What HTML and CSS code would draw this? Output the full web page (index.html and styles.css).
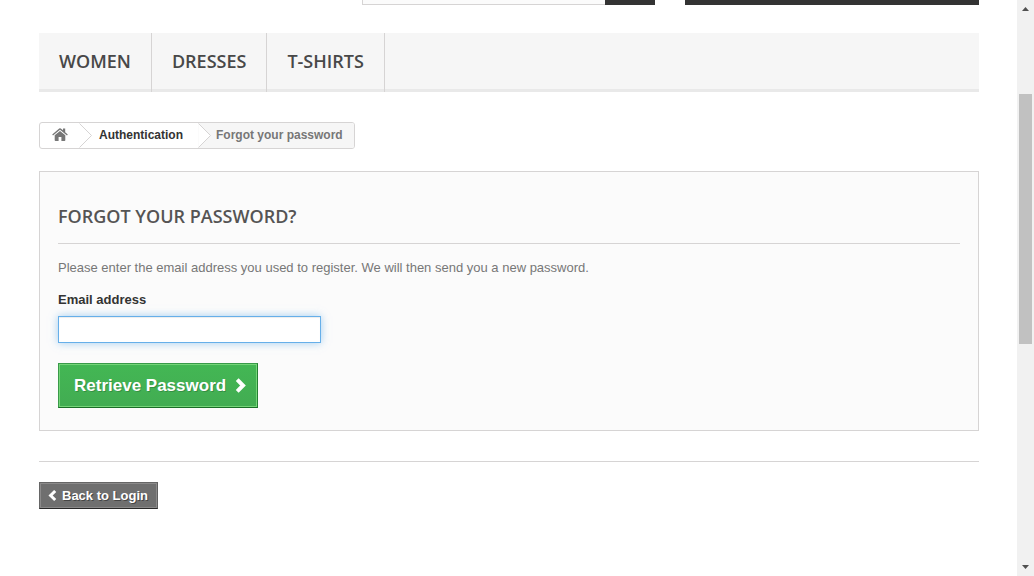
FILE: index.html
```html
<!DOCTYPE html>
<html lang="en">
<head>
<meta charset="utf-8">
<meta name="viewport" content="width=device-width, initial-scale=1">
<title>Forgot your password</title>
<link rel="stylesheet" href="styles.css">
</head>
<body>
<div class="page">
  <header class="header">
    <div class="search"><div class="search-field"></div><div class="search-submit"></div></div>
    <div class="cart"></div>
  </header>
  <nav class="menu" aria-label="Categories">
    <a class="menu-link" href="#">WOMEN</a>
    <a class="menu-link" href="#">DRESSES</a>
    <a class="menu-link" href="#">T-SHIRTS</a>
  </nav>
  <nav class="breadcrumb" aria-label="Breadcrumb">
    <a class="crumb crumb-home" href="#" aria-label="Home">
      <svg class="home-icon" viewBox="0 0 16 13" aria-hidden="true"><path d="M8 2.9 13.3 7.3V12.2Q13.3 13 12.5 13H9.4V9H6.6V13H3.5Q2.7 13 2.7 12.2V7.3Z"/><path d="M.2 6.4 7.2.5Q8 0 8.8.5L11 2.3V.6H13.2V4.2L15.8 6.4 15 7.4 8 1.7 1 7.4Z"/></svg>
    </a>
    <svg class="crumb-arrow" viewBox="0 0 13 25" aria-hidden="true"><path class="arrow-next-white" d="M0 0H13V25H0Z"/><path class="arrow-line" d="M.5.5 12.5 12.5.5 24.5"/></svg>
    <a class="crumb" href="#">Authentication</a>
    <svg class="crumb-arrow" viewBox="0 0 13 25" aria-hidden="true"><path class="arrow-next-gray" d="M0 0H13V25H0Z"/><path class="arrow-line" d="M.5.5 12.5 12.5.5 24.5"/></svg>
    <span class="crumb crumb-current">Forgot your password</span>
  </nav>
  <main>
    <form class="panel">
      <h1 class="title">FORGOT YOUR PASSWORD?</h1>
      <p class="intro">Please enter the email address you used to register. We will then send you a new password.</p>
      <label class="label" for="email">Email address</label>
      <input class="email" id="email" type="email">
      <button class="submit" type="button"><span>Retrieve Password</span><svg class="submit-icon" viewBox="0 0 11 16" aria-hidden="true"><path d="M2.2 1.7 8 7.5 2.2 13.3"/></svg></button>
    </form>
    <div class="footer-links">
      <a class="back" href="#"><svg class="back-icon" viewBox="0 0 9 12" aria-hidden="true"><path d="M7.2 1 2.6 5.5 7.2 10"/></svg><span>Back to Login</span></a>
    </div>
  </main>
</div>
<div class="scrollbar" aria-hidden="true">
  <svg class="scroll-arrow" viewBox="0 0 17 17"><path d="M5 11H12L8.5 7Z"/></svg>
  <div class="track"><div class="thumb"></div></div>
  <svg class="scroll-arrow" viewBox="0 0 17 17"><path d="M5 6H12L8.5 10Z"/></svg>
</div>
</body>
</html>
```
FILE: styles.css
```css
* { box-sizing: border-box; }

body {
  margin: 0;
  display: flex;
  min-height: 100vh;
  background: #fff;
  color: #777;
  font: 13px/18px "Liberation Sans", Arial, sans-serif;
}

a { text-decoration: none; }

.page {
  flex: 1;
  padding: 0 38px 0 39px;
}

.header {
  display: grid;
  grid-template-columns: 293fr 293fr 294fr;
  gap: 30px;
  margin-bottom: 28px;
}

.search {
  grid-column: 2;
  display: flex;
  height: 5px;
}

.search-field {
  flex: 1;
  border: solid #d6d4d4;
  border-width: 0 0 1px 1px;
  background: #fbfbfb;
}

.search-submit { width: 50px; background: #333; }
.cart { background: #333; }

.menu {
  display: flex;
  border-bottom: 3px solid #e9e9e9;
  background: #f6f6f6;
}

.menu-link {
  margin-bottom: -3px;
  padding: 16px 20px 19px;
  border-right: 1px solid #d6d4d4;
  color: #484848;
  font: 600 18px/24px "Open Sans", sans-serif;
}

.breadcrumb {
  display: inline-flex;
  margin: 30px 0 22px;
  border: 1px solid #d6d4d4;
  border-radius: 3px;
  overflow: hidden;
  font-size: 12px;
  font-weight: bold;
  line-height: 25px;
  vertical-align: top;
}

.crumb { padding: 0 15px 0 7px; color: #333; }
.crumb-home { display: flex; padding: 5px 11px 0 12px; }
.crumb-current { padding: 0 11px 0 5px; background: #f6f6f6; color: #777; }
.home-icon { width: 16px; height: 13px; fill: #777; }
.crumb-arrow { width: 13px; height: 25px; }
.arrow-next-white { fill: #fff; }
.arrow-next-gray { fill: #f6f6f6; }
.arrow-line { fill: #fff; stroke: #d6d4d4; }

.panel {
  padding: 31px 18px 22px;
  border: 1px solid #d6d4d4;
  background: #fbfbfb;
}

.title {
  margin: 0 0 15px;
  padding-bottom: 14px;
  border-bottom: 1px solid #d6d4d4;
  color: #555454;
  font: 600 18px/26px "Open Sans", sans-serif;
}

.intro { margin: 0 0 14px; }

.label {
  display: block;
  margin-bottom: 7px;
  color: #333;
  font-weight: bold;
}

.email {
  display: block;
  width: 263px;
  max-width: 100%;
  height: 27px;
  margin-bottom: 20px;
  padding: 3px 5px;
  border: 1px solid #66afe9;
  background: #fff;
  box-shadow: inset 0 1px 1px rgba(0, 0, 0, .075), 0 0 8px rgba(102, 175, 233, .6);
  color: #9c9b9b;
  font: inherit;
  outline: none;
}

.submit {
  display: flex;
  align-items: center;
  gap: 9px;
  padding: 12px 11px 11px 15px;
  border: 1px solid;
  border-color: #399a49 #247f32 #1a6d27 #399a49;
  background: linear-gradient(#43b754, #42ac52);
  box-shadow: inset 0 0 0 1px #74d578;
  color: #fff;
  font: bold 17px/20px "Liberation Sans", Arial, sans-serif;
  text-shadow: 1px 1px rgba(0, 0, 0, .2);
}

.submit-icon { width: 11px; height: 16px; }
.submit-icon path, .back-icon path { fill: none; stroke: #fff; stroke-width: 4; }

.footer-links {
  display: flex;
  margin-top: 30px;
  padding-top: 20px;
  border-top: 1px solid #d6d4d4;
}

.back {
  display: flex;
  align-items: center;
  gap: 5px;
  padding: 5px 9px 4px 8px;
  border: 1px solid;
  border-color: #666 #5f5f5f #292929 #666;
  background: #6f6f6f;
  box-shadow: inset 0 0 0 1px #8b8a8a;
  color: #fff;
  font-weight: bold;
  line-height: 16px;
  text-shadow: 1px 1px rgba(0, 0, 0, .4);
}

.back-icon { width: 9px; height: 12px; }
.back-icon path { stroke-width: 3; }

.scrollbar {
  display: flex;
  flex-direction: column;
  width: 17px;
  background: #f1f1f1;
}

.scroll-arrow { width: 17px; height: 17px; fill: #505050; }
.track { flex: 1; padding: 77px 2px 0; }
.thumb { height: 250px; background: #c1c1c1; }
```
